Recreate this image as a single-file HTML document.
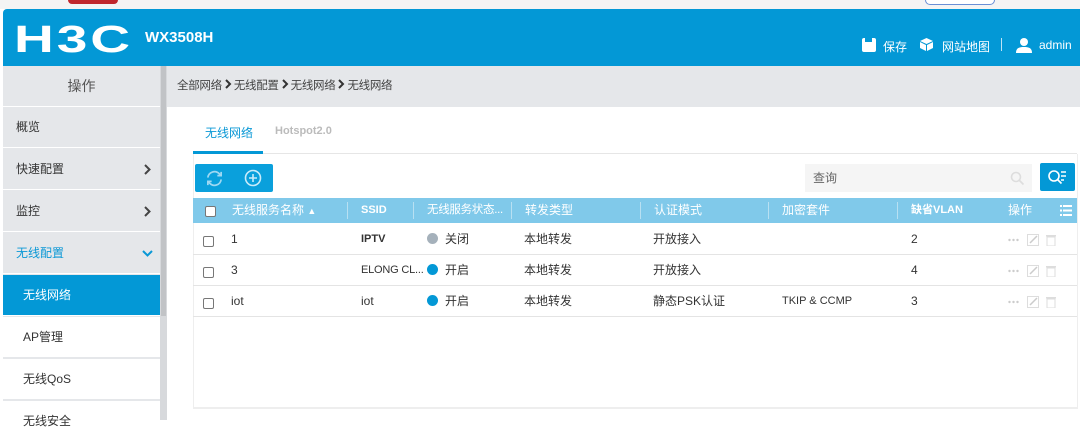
<!DOCTYPE html><html><head><meta charset="utf-8"><style>
*{box-sizing:border-box;margin:0;padding:0}
body{width:1080px;height:420px;overflow:hidden;background:#fff;font-family:"Liberation Sans","Noto Sans CJK SC",sans-serif;font-size:12px;color:#333;position:relative}
.a{position:absolute}
.hdr{left:3px;top:9px;width:1077px;height:57px;background:#0398d6;border-radius:4px 0 0 0}
.side{left:3px;top:66px;width:157px;height:354px;background:#e5e7ea}
.item{position:absolute;left:3px;width:157px;height:41px;line-height:41px;padding-left:13px;border-bottom:1px solid #fff;color:#333}
.arr{position:absolute;right:9px;top:15px}
.th{position:absolute;top:198px;height:25px;line-height:25px;color:#fff;font-size:12px}
.sep{position:absolute;top:202px;width:1px;height:17px;background:#b8e0f2}
.row{position:absolute;left:193px;width:884px;height:31px;border-bottom:1px solid #e4e4e4}
.c{position:absolute;top:0;line-height:31px;font-size:12px;color:#333}
.cb{position:absolute;width:11px;height:11px;border:1px solid #777;border-radius:2px;background:#fff}
.dot{display:inline-block;width:11px;height:11px;border-radius:50%;vertical-align:-1px;margin-right:7px}
.ops{position:absolute;left:815px;top:10px}
</style></head><body>
<div class="a" style="left:0;top:0;width:1080px;height:9px;background:#f4f4f4"></div>
<div class="a" style="left:68px;top:0;width:50px;height:4px;background:#c0272d;border-radius:0 0 8px 8px"></div>
<div class="a" style="left:925px;top:0;width:70px;height:5px;border:1px solid #6a8fd6;border-top:none;border-radius:0 0 8px 8px;background:#fff"></div>
<div class="a hdr"></div>
<div class="a" style="left:14px;top:22px;color:#fff;font-size:38px;font-weight:bold;letter-spacing:2px;line-height:36px;transform:scaleX(1.45);transform-origin:left;font-family:'Liberation Sans',sans-serif">H3C</div>
<div class="a" style="left:145px;top:29px;color:#fff;font-size:15px;font-weight:bold">WX3508H</div>
<div class="a" style="left:862px;top:38px;width:14px;height:14px;background:#fff;border-radius:2px"><div style="position:absolute;left:3px;top:0;width:7px;height:4px;background:#0398d6"></div></div>
<div class="a" style="left:883px;top:38px;color:#fff;font-size:12px">保存</div>
<svg class="a" style="left:919px;top:37px" width="15" height="15" viewBox="0 0 15 15"><path d="M7.5 1L14 4 7.5 7 1 4z M1 5l6 3v6L1 11z M8 8l6-3v6l-6 3z" fill="#fff"/></svg>
<div class="a" style="left:942px;top:38px;color:#fff;font-size:12px">网站地图</div>
<div class="a" style="left:1001px;top:38px;width:1px;height:13px;background:#bfe3f5"></div>
<svg class="a" style="left:1016px;top:37px" width="16" height="16" viewBox="0 0 16 16"><circle cx="8" cy="5" r="4" fill="#fff"/><path d="M0 16c0-5 3-6 8-6s8 1 8 6z" fill="#fff"/></svg>
<div class="a" style="left:1039px;top:38px;color:#fff;font-size:12px">admin</div>
<div class="a side"></div>
<div class="a" style="left:160px;top:66px;width:7px;height:354px;background:#d7d9dc"></div>
<div class="a" style="left:161px;top:66px;width:5px;height:250px;background:#c1c3c6"></div>
<div class="a" style="left:3px;top:66px;width:157px;height:41px;line-height:41px;text-align:center;font-size:14px;color:#555;border-bottom:1px solid #fff">操作</div>
<div class="item" style="top:107px">概览</div>
<div class="item" style="top:149px">快速配置<svg class="arr" width="8" height="11" viewBox="0 0 8 11"><path d="M2 1l4.5 4.5L2 10" fill="none" stroke="#444" stroke-width="2"/></svg></div>
<div class="item" style="top:191px">监控<svg class="arr" width="8" height="11" viewBox="0 0 8 11"><path d="M2 1l4.5 4.5L2 10" fill="none" stroke="#444" stroke-width="2"/></svg></div>
<div class="item" style="top:233px;color:#0a98d6">无线配置<svg class="arr" style="top:16px;right:7px" width="11" height="8" viewBox="0 0 11 8"><path d="M1 2l4.5 4.5L10 2" fill="none" stroke="#0a98d6" stroke-width="2"/></svg></div>
<div class="item" style="top:275px;background:#0398d6;color:#fff;padding-left:20px">无线网络</div>
<div class="item" style="top:317px;background:#fff;border-bottom:1px solid #e5e7ea;padding-left:20px">AP管理</div>
<div class="item" style="top:359px;background:#fff;border-bottom:1px solid #e5e7ea;padding-left:20px">无线QoS</div>
<div class="item" style="top:401px;background:#fff;padding-left:20px">无线安全</div>
<div class="a" style="left:167px;top:66px;width:913px;height:41px;background:#e5e7ea;line-height:41px;padding-left:10px;color:#444;font-size:11.5px;letter-spacing:-0.3px">全部网络<svg width="8" height="10" viewBox="0 0 8 10" style="margin:0 2px"><path d="M2 1l4 4-4 4" fill="none" stroke="#333" stroke-width="2"/></svg>无线配置<svg width="8" height="10" viewBox="0 0 8 10" style="margin:0 2px"><path d="M2 1l4 4-4 4" fill="none" stroke="#333" stroke-width="2"/></svg>无线网络<svg width="8" height="10" viewBox="0 0 8 10" style="margin:0 2px"><path d="M2 1l4 4-4 4" fill="none" stroke="#333" stroke-width="2"/></svg>无线网络</div>
<div class="a" style="left:205px;top:124px;color:#0a98d6;font-size:12px">无线网络</div>
<div class="a" style="left:275px;top:125px;color:#bbb;font-size:11px;font-weight:bold">Hotspot2.0</div>
<div class="a" style="left:193px;top:153px;width:884px;height:1px;background:#e6e6e6"></div>
<div class="a" style="left:193px;top:151px;width:70px;height:3px;background:#0398d6"></div>
<div class="a" style="left:195px;top:164px;width:78px;height:28px;background:#0aa0dc;border-radius:2px"></div>
<svg class="a" style="left:205px;top:169px" width="19" height="19" viewBox="0 0 20 20" fill="none" stroke="#9fd8f2" stroke-width="1.8"><path d="M3 9a7 7 0 0 1 12-4l2 2M17 11a7 7 0 0 1-12 4l-2-2"/><path d="M17 3v4h-4M3 17v-4h4"/></svg>
<svg class="a" style="left:244px;top:169px" width="18" height="18" viewBox="0 0 18 18" fill="none" stroke="#c8ebfa" stroke-width="1.6"><circle cx="9" cy="9" r="7.5"/><path d="M9 5v8M5 9h8"/></svg>
<div class="a" style="left:805px;top:164px;width:227px;height:28px;background:#f5f5f5;line-height:28px;padding-left:8px;color:#666">查询</div>
<svg class="a" style="left:1010px;top:171px" width="15" height="15" viewBox="0 0 15 15" fill="none" stroke="#ddd" stroke-width="1.6"><circle cx="6" cy="6" r="4.5"/><path d="M9.5 9.5l4 4"/></svg>
<div class="a" style="left:1040px;top:163px;width:35px;height:28px;background:#0398d6;border-radius:2px"></div>
<svg class="a" style="left:1047px;top:168px" width="20" height="18" viewBox="0 0 20 18" fill="none" stroke="#fff" stroke-width="1.6"><circle cx="7" cy="8" r="5"/><path d="M10.5 11.5l4 4M14 4h5M14 8h5M14 12h3"/></svg>
<div class="a" style="left:193px;top:154px;width:1px;height:255px;background:#eee"></div>
<div class="a" style="left:1077px;top:154px;width:1px;height:255px;background:#eee"></div>
<div class="a" style="left:193px;top:407px;width:885px;height:2px;background:#eee"></div>
<div class="a" style="left:193px;top:198px;width:884px;height:25px;background:#80c9ea"></div>
<div class="cb" style="left:205px;top:206px"></div>
<div class="th" style="left:232px">无线服务名称 <span style="font-size:9px">▲</span></div>
<div class="sep" style="left:347px"></div><div class="th" style="left:361px;font-weight:bold;font-size:11px">SSID</div>
<div class="sep" style="left:413px"></div><div class="th" style="left:427px;font-size:11.5px;letter-spacing:-0.3px">无线服务状态...</div>
<div class="sep" style="left:511px"></div><div class="th" style="left:525px">转发类型</div>
<div class="sep" style="left:640px"></div><div class="th" style="left:654px">认证模式</div>
<div class="sep" style="left:768px"></div><div class="th" style="left:782px">加密套件</div>
<div class="sep" style="left:897px"></div><div class="th" style="left:911px;font-weight:bold;font-size:11px">缺省VLAN</div>
<div class="th" style="left:1008px">操作</div>
<svg class="a" style="left:1060px;top:205px" width="12" height="11" viewBox="0 0 12 11" fill="#fff"><rect x="0" y="0" width="2" height="2"/><rect x="3" y="0" width="9" height="2"/><rect x="0" y="4.5" width="2" height="2"/><rect x="3" y="4.5" width="9" height="2"/><rect x="0" y="9" width="2" height="2"/><rect x="3" y="9" width="9" height="2"/></svg>
<div class="row" style="top:224px"><div class="cb" style="left:10px;top:12px"></div><div class="c" style="left:38px">1</div><div class="c" style="left:168px;font-weight:bold;font-size:11px">IPTV</div><div class="c" style="left:234px"><span class="dot" style="background:#a5b1bb"></span>关闭</div><div class="c" style="left:331px">本地转发</div><div class="c" style="left:460px">开放接入</div><div class="c" style="left:718px">2</div><svg class="ops" width="56" height="12" viewBox="0 0 56 12"><circle cx="1.5" cy="6" r="1.2" fill="#ccc"/><circle cx="5.5" cy="6" r="1.2" fill="#ccc"/><circle cx="9.5" cy="6" r="1.2" fill="#ccc"/><rect x="19.5" y="0.5" width="11" height="11" fill="none" stroke="#ddd"/><path d="M22 9l7-7" stroke="#ccc" stroke-width="1.5"/><rect x="38" y="1" width="10" height="1.5" fill="#ddd"/><rect x="39" y="3" width="8" height="9" fill="none" stroke="#ddd"/></svg></div>
<div class="row" style="top:255px"><div class="cb" style="left:10px;top:12px"></div><div class="c" style="left:38px">3</div><div class="c" style="left:168px;font-size:11px;letter-spacing:-0.2px">ELONG CL...</div><div class="c" style="left:234px"><span class="dot" style="background:#0398d6"></span>开启</div><div class="c" style="left:331px">本地转发</div><div class="c" style="left:460px">开放接入</div><div class="c" style="left:718px">4</div><svg class="ops" width="56" height="12" viewBox="0 0 56 12"><circle cx="1.5" cy="6" r="1.2" fill="#ccc"/><circle cx="5.5" cy="6" r="1.2" fill="#ccc"/><circle cx="9.5" cy="6" r="1.2" fill="#ccc"/><rect x="19.5" y="0.5" width="11" height="11" fill="none" stroke="#ddd"/><path d="M22 9l7-7" stroke="#ccc" stroke-width="1.5"/><rect x="38" y="1" width="10" height="1.5" fill="#ddd"/><rect x="39" y="3" width="8" height="9" fill="none" stroke="#ddd"/></svg></div>
<div class="row" style="top:286px"><div class="cb" style="left:10px;top:12px"></div><div class="c" style="left:38px">iot</div><div class="c" style="left:168px">iot</div><div class="c" style="left:234px"><span class="dot" style="background:#0398d6"></span>开启</div><div class="c" style="left:331px">本地转发</div><div class="c" style="left:460px">静态PSK认证</div><div class="c" style="left:589px;font-size:11px">TKIP &amp; CCMP</div><div class="c" style="left:718px">3</div><svg class="ops" width="56" height="12" viewBox="0 0 56 12"><circle cx="1.5" cy="6" r="1.2" fill="#ccc"/><circle cx="5.5" cy="6" r="1.2" fill="#ccc"/><circle cx="9.5" cy="6" r="1.2" fill="#ccc"/><rect x="19.5" y="0.5" width="11" height="11" fill="none" stroke="#ddd"/><path d="M22 9l7-7" stroke="#ccc" stroke-width="1.5"/><rect x="38" y="1" width="10" height="1.5" fill="#ddd"/><rect x="39" y="3" width="8" height="9" fill="none" stroke="#ddd"/></svg></div>
</body></html>
